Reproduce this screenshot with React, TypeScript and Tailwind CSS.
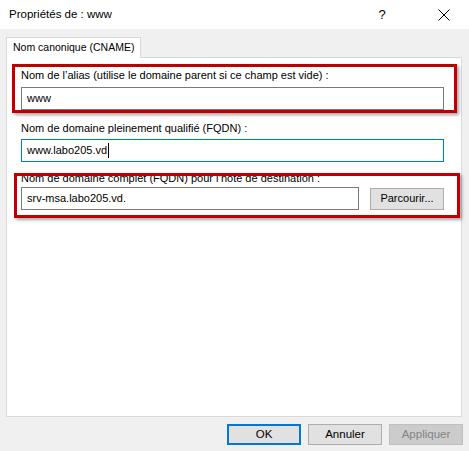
import React from 'react';

const font = { fontFamily: '"Liberation Sans", Arial, sans-serif' };

const Btn: React.FC<{ label: string; variant?: 'default' | 'primary' | 'disabled' }> = ({
  label,
  variant = 'default',
}) => {
  const cls =
    variant === 'primary'
      ? 'border-2 border-[#0078d7] bg-[#e1e1e1] text-black'
      : variant === 'disabled'
      ? 'border border-[#bfbfbf] bg-[#cccccc] text-[#838383]'
      : 'border border-[#adadad] bg-[#e1e1e1] text-black';
  return (
    <div className={`w-[74px] h-[21px] flex items-center justify-center text-[11.5px] leading-none ${cls}`}>
      {label}
    </div>
  );
};

export default function App() {
  return (
    <div className="w-[469px] h-[451px] bg-[#f0f0f0] text-black overflow-hidden" style={font}>
      {/* barre de titre */}
      <div className="h-[29px] bg-white flex items-center">
        <span className="pl-[9px] text-[11.5px] flex-1">Propriétés de : www</span>
        <span className="w-[20px] text-center text-[13px] mr-[46px]">?</span>
        <svg className="mr-[19px]" width="12" height="12" viewBox="0 0 12 12">
          <path d="M0.5 0.5 L11.5 11.5 M11.5 0.5 L0.5 11.5" stroke="#000" strokeWidth="1" />
        </svg>
      </div>

      <div className="pl-[6px] pt-[8px]">
        {/* onglet */}
        <div className="relative z-10 -mb-px w-[135px] h-[21px] border border-b-0 border-[#d9d9d9] bg-white flex items-center pl-[6px] text-[10.5px] whitespace-nowrap">
          Nom canonique (CNAME)
        </div>

        {/* panneau */}
        <div className="relative w-[456px] h-[360px] border border-[#d9d9d9] bg-white pt-[9px] pl-[14px] text-[11px] whitespace-nowrap">
          <div className="leading-[16px] mb-[4px]">Nom de l’alias (utilise le domaine parent si ce champ est vide) :</div>
          <div className="w-[423px] h-[23px] border border-[#7a7a7a] flex items-center pl-[5px]">www</div>

          <div className="leading-[16px] mt-[10px] mb-[3px]">Nom de domaine pleinement qualifié (FQDN) :</div>
          <div className="w-[423px] h-[23px] border border-[#0078d7] flex items-center pl-[5px]">
            <span>www.labo205.vd</span>
            <span className="w-px h-[15px] bg-black ml-px" />
          </div>

          <div className="leading-[16px] mt-[8px] mb-[1px]">Nom de domaine complet (FQDN) pour l’hôte de destination :</div>
          <div className="flex items-center gap-[11px]">
            <div className="w-[338px] h-[23px] border border-[#7a7a7a] flex items-center pl-[5px]">srv-msa.labo205.vd.</div>
            <div className="w-[74px] h-[22px] border border-[#adadad] bg-[#e1e1e1] flex items-center justify-center">
              Parcourir...
            </div>
          </div>

          {/* annotations rouges */}
          <div className="absolute left-[5px] top-[6px] w-[445px] h-[49px] border-[3px] border-[#c00000] shadow-[2px_2px_3px_rgba(0,0,0,0.35)]" />
          <div className="absolute left-[7px] top-[115px] w-[446px] h-[45px] border-[3px] border-[#c00000] shadow-[2px_2px_3px_rgba(0,0,0,0.35)]" />
        </div>
      </div>

      {/* boutons */}
      <div className="flex justify-end gap-[7px] pr-[6px] mt-[7px]">
        <Btn label="OK" variant="primary" />
        <Btn label="Annuler" />
        <Btn label="Appliquer" variant="disabled" />
      </div>
    </div>
  );
}
